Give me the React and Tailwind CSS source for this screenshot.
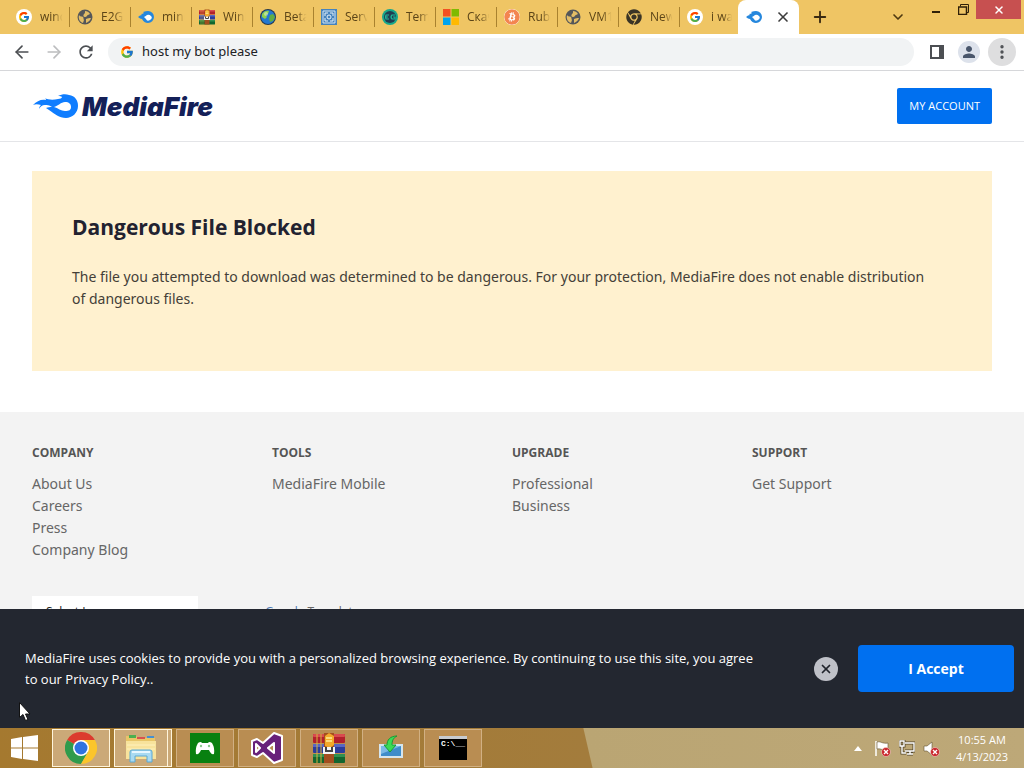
import React from 'react';
import { FcGoogle } from 'react-icons/fc';
import { FaBitcoin, FaChrome } from 'react-icons/fa';
import { MdPerson, MdRefresh } from 'react-icons/md';
import { ArrowLeft, ArrowRight, ChevronDown, MoreVertical, Plus, X } from 'lucide-react';

const GoogleBadge = () => (
  <span className="flex w-4 h-4 items-center justify-center rounded-full bg-white">
    <FcGoogle className="w-3 h-3" />
  </span>
);

const WinRar = ({ className }) => (
  <svg viewBox="0 0 32 30" className={className}>
    <rect x="0" y="1" width="32" height="9" rx="1" fill="#b3202c" />
    <rect x="0" y="1" width="32" height="3" rx="1" fill="#d94a4f" />
    <rect x="0" y="11" width="32" height="9" rx="1" fill="#2b3c9c" />
    <rect x="0" y="11" width="32" height="3" fill="#5867c4" />
    <rect x="0" y="21" width="32" height="9" rx="1" fill="#12662f" />
    <rect x="0" y="21" width="32" height="3" fill="#2f9150" />
    <path d="M4 1v29M8 1v29" stroke="#d8b23c" strokeWidth="1" />
    <rect x="11" y="0" width="10" height="30" fill="#a34e1f" />
    <path d="M12 3l4-3 5 3v9l-4 3-5-2z" fill="#f3a929" />
    <path d="M13 5h6M13 8h6" stroke="#fbdc7a" strokeWidth="2" />
    <path d="M10 14h12v7H10z" fill="#f4f4f4" />
    <path d="M13 14v4h6v-4" fill="none" stroke="#444" strokeWidth="2" />
  </svg>
);

const Earth = () => (
  <svg viewBox="0 0 16 16" className="w-4 h-4">
    <circle cx="8" cy="8" r="8" fill="#24384a" />
    <circle cx="8" cy="8" r="7" fill="#2478d0" />
    <path d="M2 5c2-3 5-4 7-3l-1 3-2 1 1 2-2 2-3-2z" fill="#8ed04b" />
    <path d="M10 6l3-1 2 3-2 4-3 1-1-3z" fill="#5fae43" />
    <circle cx="6" cy="5" r="2" fill="#fff" opacity=".4" />
  </svg>
);

const ServerIcon = () => (
  <svg viewBox="0 0 16 16" className="w-4 h-4">
    <rect width="16" height="16" fill="#4683bd" />
    <path d="M2 2h12v12H2z" fill="none" stroke="#d4e6f4" />
    <path d="M4 7V4h3M9 4h3v3M12 9v3H9M7 12H4V9" fill="none" stroke="#e7f2fa" />
    <circle cx="8" cy="8" r="2" fill="none" stroke="#e7f2fa" />
  </svg>
);

const TempIcon = () => (
  <svg viewBox="0 0 16 16" className="w-4 h-4">
    <circle cx="8" cy="8" r="8" fill="#18a78b" />
    <circle cx="8" cy="8" r="6" fill="#213d52" />
    <path d="M7 6H4q-1 2 0 4h3M4 8h2M13 6h-3q-2 2 0 4h3V8h-2" fill="none" stroke="#20b99c" strokeWidth="1.2" />
  </svg>
);

const Microsoft = () => (
  <svg viewBox="0 0 16 16" className="w-4 h-4">
    <path d="M0 0h7.5v7.5H0z" fill="#f25022" />
    <path d="M8.500 0H16v7.500H8.500z" fill="#7fba00" />
    <path d="M0 8.500h7.500V16H0z" fill="#00a4ef" />
    <path d="M8.500 8.500H16V16H8.500z" fill="#ffb900" />
  </svg>
);

const Bitcoin = () => <FaBitcoin className="w-4 h-4 rounded-full bg-white text-[#f38550]" />;

// Round "no favicon" globe
const Globe = () => (
  <svg viewBox="0 0 16 16" className="w-4 h-4">
    <circle cx="8" cy="8" r="7.500" fill="#555759" />
    <path d="M2 6c1 2 3 1 4 2s0 2 1 3l-1 3C3 13 1 10 2 6zM8 2c2 0 4 1 5 3l-2 1c-1 0-1 2-3 2S6 6 7 5s1-1 1-3zM9 10c2-1 3-1 5-1-1 3-3 4-5 5z" fill="#e3bd66" />
  </svg>
);

const Flame = () => (
  <svg viewBox="0 0 16 12" className="h-3 w-4">
    <path d="M0 6q2-2 4-2L3 3q2 0 3-1l-1-1q3-1 5-1a6 6 0 0 1 0 12q-4 0-6-4Q2 8 0 6z" fill="#2587dd" />
    <path d="M6 6q2-1 3-2 2-1 4 1t-1 4-4-1z" fill="#fff" />
  </svg>
);

const tabs = [
  { title: 'windows', icon: <GoogleBadge /> },
  { title: 'E2G', icon: <Globe /> },
  { title: 'minecraft', icon: <Flame /> },
  { title: 'WinRAR', icon: <WinRar className="w-4 h-4" /> },
  { title: 'Beta', icon: <Earth /> },
  { title: 'Server', icon: <ServerIcon /> },
  { title: 'Temp', icon: <TempIcon /> },
  { title: 'Скачать', icon: <Microsoft /> },
  { title: 'Rubot', icon: <Bitcoin /> },
  { title: 'VM1', icon: <Globe /> },
  { title: 'New Tab', icon: <FaChrome className="w-4 h-4 text-[#3a3426]" /> },
  { title: 'i want', icon: <GoogleBadge /> },
];

const TabStrip = () => (
  <div className="flex h-[34px] shrink-0 bg-[#efc564] text-[#5b4417]">
    <div className="flex min-w-0 pl-[9px]">
      {tabs.map((tab, i) => (
        <button
          key={i}
          className={`flex shrink-0 items-center gap-2 pl-[7px] ${i === tabs.length - 1 ? 'w-[58px]' : 'w-[61px]'}`}
        >
          <span className="shrink-0">{tab.icon}</span>
          <span className="w-5 grow overflow-hidden whitespace-nowrap text-left text-xs [mask-image:linear-gradient(to_right,#000_45%,transparent_78%)]">
            {tab.title}
          </span>
          {i < tabs.length - 1 && <span className="-ml-2 h-5 w-px shrink-0 bg-[#a9822f]" />}
        </button>
      ))}
      <div className="flex w-[61px] shrink-0 items-center justify-between rounded-t-lg bg-white px-2">
        <Flame />
        <button aria-label="Close tab" className="text-[#3c3c3c]">
          <X className="w-4 h-4" strokeWidth={2.5} />
        </button>
      </div>
    </div>
    <button aria-label="New tab" className="ml-3 text-[#3a2a12]">
      <Plus className="w-[18px] h-[18px]" strokeWidth={2.5} />
    </button>
    <div className="ml-auto flex">
      <button aria-label="Search tabs" className="mr-4 self-center text-[#4d3810]">
        <ChevronDown className="w-4 h-4" strokeWidth={2.5} />
      </button>
      <button aria-label="Minimize" className="flex h-5 w-7 items-center justify-center pt-1">
        <span className="h-0.5 w-2 bg-[#2f2008]" />
      </button>
      <button aria-label="Restore" className="flex h-[18px] w-[26px] items-center justify-center">
        <svg viewBox="0 0 11 11" className="w-[11px] h-[11px]" fill="none" stroke="#2f2008">
          <path d="M2.500 2.500V.5h8v8h-2" />
          <path d="M.5 3h8v7.500h-8z" strokeWidth="1.500" />
        </svg>
      </button>
      <button aria-label="Close window" className="mr-[3px] flex h-[19px] w-[45px] items-center justify-center bg-[#c75050] text-white">
        <X className="w-3 h-3" strokeWidth={3} />
      </button>
    </div>
  </div>
);

const Toolbar = () => (
  <div className="flex h-[37px] shrink-0 items-center border-b border-[#d6d7da] bg-white pl-3 pr-2 text-[#4c4f53]">
    <button aria-label="Back"><ArrowLeft className="w-5 h-5" /></button>
    <button aria-label="Forward" className="ml-3 text-[#bcbdbf]"><ArrowRight className="w-5 h-5" /></button>
    <button aria-label="Reload" className="ml-3"><MdRefresh className="w-5 h-5" /></button>
    <div className="ml-3 flex h-7 min-w-0 grow items-center gap-2 rounded-full bg-[#f1f3f4] pl-3">
      <FcGoogle className="w-3.5 h-3.5 shrink-0" />
      <input
        aria-label="Address and search bar"
        defaultValue="host my bot please"
        className="min-w-0 grow bg-transparent font-['Noto_Sans'] text-[13px] text-[#202124] outline-none"
      />
    </div>
    <button aria-label="Side panel" className="ml-4">
      <svg viewBox="0 0 14 14" className="w-[14px] h-[14px]">
        <path d="M1 1h12v12H1z" fill="none" stroke="#4c4f53" strokeWidth="2" />
        <path d="M9 0h5v14H9z" fill="#4c4f53" />
      </svg>
    </button>
    <button aria-label="Profile" className="ml-[14px] flex h-[22px] w-[22px] items-center justify-center rounded-full bg-[#dde2eb] text-[#49566b]">
      <MdPerson className="w-[18px] h-[18px]" />
    </button>
    <button aria-label="Menu" className="ml-2 flex h-7 w-7 items-center justify-center rounded-full bg-[#dededf]">
      <MoreVertical className="w-[18px] h-[18px]" strokeWidth={2.5} />
    </button>
  </div>
);

const footerColumns = [
  { heading: 'COMPANY', links: ['About Us', 'Careers', 'Press', 'Company Blog'] },
  { heading: 'TOOLS', links: ['MediaFire Mobile'] },
  { heading: 'UPGRADE', links: ['Professional', 'Business'] },
  { heading: 'SUPPORT', links: ['Get Support'] },
];

const Header = () => (
  <header className="flex h-[71px] items-center justify-between border-b border-[#e4e5e8] px-8">
    <a href="#" className="flex items-center gap-1">
      <svg viewBox="0 0 46 26" className="h-[26px] w-[46px]" fill="#0f7dff">
        <path d="M1 12c4-4 8-6 13-5 0-1-1-2-2-2 5 2 9 2 14 1 2 0 4-1 4-2-1-1-2-1-4-1 4-2 8-2 11-1 6 1 9 5 9 11 0 7-6 12-12 12-7 0-11-4-17-8l-3-2c2-1 4-1 6-1-3-2-5-2-7-2-3 0-5 2-6 4 0-2 1-3 2-4-3-1-6-1-8 0z" />
        <path d="M22 14c4-1 7-5 11-5 4 0 6 2 6 5s-2 4-6 4-7-3-11-4z" fill="#fff" />
      </svg>
      <span className="font-['Inter'] text-[26px] font-black italic text-[#142058]">MediaFire</span>
    </a>
    <button className="h-9 rounded-xs bg-[#0070f0] px-3 text-[11px] text-white">MY ACCOUNT</button>
  </header>
);

const Footer = () => (
  <footer className="bg-[#f3f3f3] px-8 pt-[30px] text-[#666]">
    <div className="grid grid-cols-4">
      {footerColumns.map((col) => (
        <div key={col.heading}>
          <h2 className="text-xs font-bold leading-[22px] text-[#555]">{col.heading}</h2>
          <ul className="mt-[9px] font-['Noto_Sans'] text-sm leading-[22px]">
            {col.links.map((link) => (
              <li key={link}><a href="#">{link}</a></li>
            ))}
          </ul>
        </div>
      ))}
    </div>
    <div className="mt-[35px] flex gap-[67px]">
      <select aria-label="Language" className="h-8 w-[166px] appearance-none bg-white pl-[14px] text-xs text-[#222]">
        <option>Select Language</option>
      </select>
      <a href="#" className="pt-2 text-xs"><span className="text-[#4b79b5]">Google</span> Translate</a>
    </div>
  </footer>
);

const CookieBanner = () => (
  <div className="absolute inset-x-0 bottom-0 flex h-[119px] items-center bg-[#232730] pl-[25px] pr-[10px] text-white">
    <p className="w-[730px] text-[13px] leading-[21px]">
      MediaFire uses cookies to provide you with a personalized browsing experience. By continuing to use this site, you agree to our <a href="#">Privacy Policy.</a>.
    </p>
    <button aria-label="Dismiss" className="ml-auto flex h-6 w-6 items-center justify-center rounded-full bg-[#bfc1c8] text-[#20242c]">
      <X className="w-[14px] h-[14px]" strokeWidth={3} />
    </button>
    <button className="ml-5 h-[47px] w-[156px] rounded-sm bg-[#0070f0] text-sm font-bold">I Accept</button>
  </div>
);

const Page = () => (
  <main className="relative min-h-0 grow overflow-hidden bg-white">
    <Header />
    <section className="mx-8 mt-[29px] mb-[41px] h-[200px] bg-[#fff1cf] pl-10 pr-14 pt-10">
      <h1 className="text-[21px] font-bold leading-8 text-[#222230]">Dangerous File Blocked</h1>
      <p className="mt-[23px] font-['Noto_Sans'] text-sm leading-[22px] text-[#443f38]">
        The file you attempted to download was determined to be dangerous. For your protection, MediaFire does not enable distribution of dangerous files.
      </p>
    </section>
    <Footer />
    <CookieBanner />
    <svg viewBox="0 0 12 19" className="absolute bottom-[7px] left-[19px] h-[19px] w-3">
      <path d="M.5.5v15l3.500-3 2.500 6 2.500-1-2.500-5.500H11z" fill="#fff" stroke="#111" />
    </svg>
  </main>
);

const ChromeLogo = () => (
  <svg viewBox="0 0 32 32" className="w-8 h-8">
    <path d="M16 16 2.140 8A16 16 0 0 1 29.860 8z" fill="#dc3a2e" />
    <path d="M16 16 2.140 8A16 16 0 0 0 16 32l7-12z" fill="#2f9b4c" />
    <path d="M16 8h13.860A16 16 0 0 1 16 32l7-12z" fill="#fbc52b" />
    <circle cx="16" cy="16" r="8" fill="#fff" />
    <circle cx="16" cy="16" r="6.500" fill="#2f73e0" />
  </svg>
);

const Explorer = () => (
  <svg viewBox="0 0 32 30" className="w-8 h-[30px]">
    <path d="M1 3h10l2 2h17v21H1z" fill="#e8c567" />
    <path d="M4 2h7v3H4z" fill="#4caf50" />
    <path d="M12 4h8v2h-8z" fill="#d9534f" />
    <path d="M22 3h7v2h-7z" fill="#468fd0" />
    <path d="M1 8h30v18H1z" fill="#f8e39c" />
    <path d="M2 12h28M2 16h28" stroke="#fff1bd" />
    <path d="M5 29V19q0-2 2-2h18q2 0 2 2v10h-5v-6H10v6z" fill="#a9daf1" stroke="#5ba8d2" />
    <path d="M7 19h18" stroke="#e7f7ff" strokeWidth="2" />
  </svg>
);

const Games = () => (
  <svg viewBox="0 0 30 30" className="h-[30px] w-[30px]">
    <path d="M0 0h30v30H0z" fill="#088010" />
    <path d="M8 10q3-2 4 0h6q1-2 4 0 3 5 2 11-3 1-5-4h-8q-2 5-5 4-1-6 2-11z" fill="#fff" />
    <circle cx="11" cy="13" r="1.200" fill="#8bc98e" />
    <circle cx="19" cy="13" r="1.200" fill="#8bc98e" />
  </svg>
);

const VisualStudio = () => (
  <svg viewBox="0 0 32 32" className="w-8 h-8">
    <path
      d="M23 1l8 3v24l-8 3-11-10-6 4-5-2V9l5-2 6 4zM23 11v10l-6-5zM5 12v8l4-4z"
      fill="#68217a"
      fillRule="evenodd"
      stroke="#fff"
      strokeWidth="2"
      strokeLinejoin="round"
    />
  </svg>
);

const Installer = () => (
  <svg viewBox="0 0 26 26" className="h-[26px] w-[26px]">
    <path d="M1 9h24v14H1z" fill="#d5e5ee" />
    <path d="M3 11h20v10H3z" fill="#3e8cca" />
    <path d="M3 11h20L3 19z" fill="#7ab9e5" />
    <path d="M19 1c-7 0-10 4-10 9H6l6 7 6-7h-4c0-4 1-7 5-9z" fill="#3bdb55" stroke="#189b34" />
  </svg>
);

const Terminal = () => (
  <div className="flex h-6 w-7 flex-col border-t-3 border-[#c7cbd0] bg-black pl-0.5 text-left font-['Liberation_Mono'] text-[8px] font-bold leading-[10px] text-white">
    C:\__
  </div>
);

const apps = [
  { name: 'Google Chrome', icon: <ChromeLogo />, active: true },
  { name: 'File Explorer', icon: <Explorer />, active: true, stacked: true },
  { name: 'Games', icon: <Games /> },
  { name: 'Visual Studio', icon: <VisualStudio /> },
  { name: 'WinRAR', icon: <WinRar className="w-8 h-[30px]" /> },
  { name: 'Installer', icon: <Installer /> },
  { name: 'Command Prompt', icon: <Terminal /> },
];

const ErrorDot = () => (
  <g>
    <circle cx="12" cy="12" r="4.500" fill="#c9252b" stroke="#f2d6cf" strokeWidth=".6" />
    <path d="M10 10l4 4M14 10l-4 4" stroke="#fff" strokeWidth="1.400" />
  </g>
);

const Taskbar = () => (
  <div className="flex h-10 shrink-0 items-center bg-[linear-gradient(77deg,#a5792f_0%,#a37c3c_57.3%,#baa573_57.4%,#bda878_100%)] text-white">
    <button aria-label="Start" className="flex h-10 w-12 items-center justify-center">
      <svg viewBox="0 0 27 26" className="h-[26px] w-[27px]" fill="#fff">
        <path d="M0 4l11-2v10.500H0zM12 2l15-2v12.500H12zM0 13.500h11V24L0 22zM12 13.500h15V26l-15-2z" />
      </svg>
    </button>
    <div className="ml-1 flex gap-1">
      {apps.map((app) => (
        <button
          key={app.name}
          aria-label={app.name}
          className={`flex h-[38px] w-[58px] ${
            app.stacked ? 'border-y border-r border-[#fff5dc] bg-[#cba978]' : ''
          }`}
        >
          <span
            className={`flex h-full grow items-center justify-center ${
              app.stacked
                ? 'mr-[3px] border-x border-[#fff5dc]'
                : app.active
                  ? 'border border-[#fff5dc] bg-[#cba978]'
                  : 'border border-[#d1b083] bg-[#b98d52]'
            }`}
          >
            {app.icon}
          </span>
        </button>
      ))}
    </div>
    <div className="ml-auto flex items-center gap-2 pr-4">
      <svg viewBox="0 0 8 5" className="mr-1 h-[5px] w-2"><path d="M4 0l4 5H0z" fill="#fff" /></svg>
      <svg viewBox="0 0 17 17" className="h-[17px] w-[17px]">
        <path d="M2 1v15" stroke="#fff" strokeWidth="1.500" />
        <path d="M3 2c4-1 5 2 11 1v7c-5 1-7-2-11-1z" fill="#fff" stroke="#635331" strokeWidth=".6" />
        <ErrorDot />
      </svg>
      <svg viewBox="0 0 16 16" className="h-4 w-4">
        <g fill="none" stroke="#54482c" strokeWidth="3">
          <path d="M6 3h9v8H6M8 14h6M11 11v3M3 6v7h4M1 1h4v5H1z" />
        </g>
        <path d="M6 3h9v8H6M8 14h6M11 11v3M3 6v7h4M1 1h4v5H1z" fill="none" stroke="#fff" strokeWidth="1.400" />
      </svg>
      <svg viewBox="0 0 17 17" className="h-[17px] w-[17px]">
        <path d="M1 6h3l5-4v13l-5-4H1z" fill="#fff" stroke="#635331" strokeWidth=".6" />
        <ErrorDot />
      </svg>
      <div className="ml-2 text-center text-[11px] leading-[17px]">
        <div>10:55 AM</div>
        <div>4/13/2023</div>
      </div>
    </div>
  </div>
);

export default function App() {
  return (
    <div className="flex h-screen flex-col overflow-hidden font-['Open_Sans','Noto_Sans',sans-serif]">
      <TabStrip />
      <Toolbar />
      <Page />
      <Taskbar />
    </div>
  );
}
